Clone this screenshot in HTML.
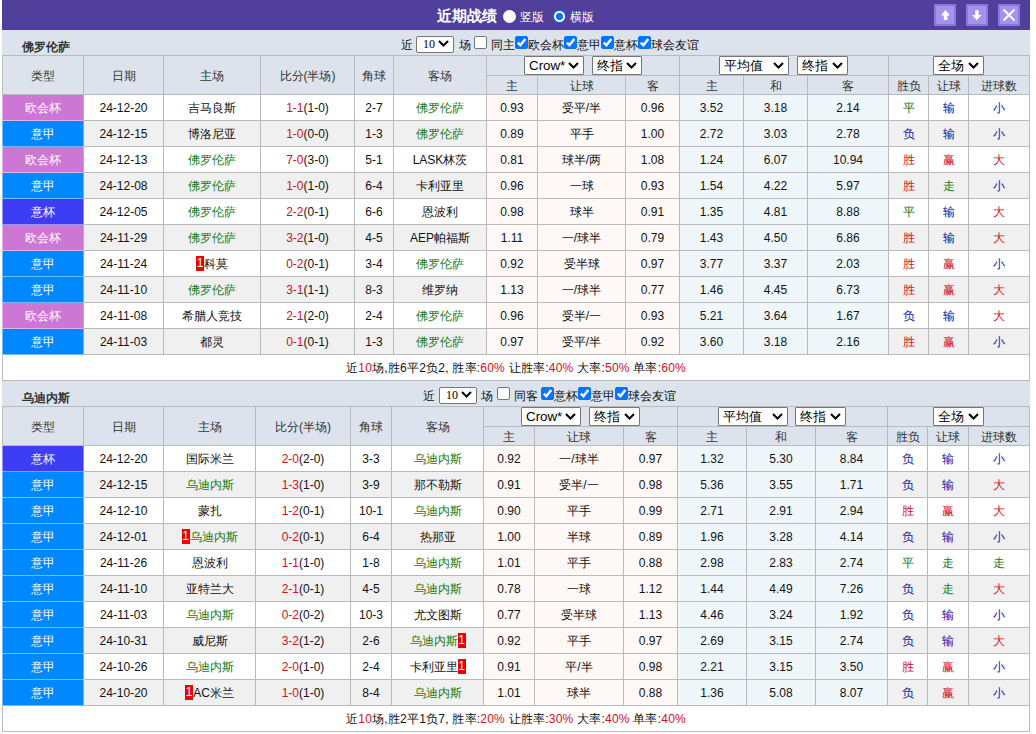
<!DOCTYPE html><html><head><meta charset="utf-8"><style>
*{margin:0;padding:0;box-sizing:border-box}
html,body{width:1036px;height:734px;overflow:hidden;background:#fff}
body{position:relative;font-family:"Liberation Sans",sans-serif;font-size:12px;color:#111}
.t{position:absolute;text-align:center;white-space:nowrap;overflow:visible}
.sum{letter-spacing:0.22px}
.rc{display:inline-block;background:#e00;color:#fff;font-size:12px;width:8px;height:15px;line-height:15px;text-align:center;vertical-align:middle;margin-top:-2px}
.ft{position:absolute;height:17px;line-height:17px;white-space:nowrap;color:#111}
.tt{position:absolute;height:30px;line-height:30px;white-space:nowrap;color:#fff}
.sel10{position:absolute;width:38px;height:17px;line-height:15px;border:1px solid #767676;border-radius:2px;background:#fff;padding-left:6px;color:#000;font-family:"Liberation Serif",serif;font-size:12px}
.sel10 .chev{top:3px}
.sel{position:absolute;height:19px;line-height:17px;border:1px solid #767676;border-radius:1px;background:#fff;padding-left:4px;color:#000;font-size:13.333px;white-space:nowrap}
.chev{position:absolute;right:4px;top:5px}
.cb{position:absolute;width:13px;height:13px;border:1px solid #767676;border-radius:2px;background:#fff}
.cb.on{background:#0075ff;border-color:#0075ff}
.rd{position:absolute;width:13px;height:13px;border-radius:50%;background:#fff}
.rd.on{border:1px solid #0075ff;background:radial-gradient(circle,#0075ff 0,#0075ff 3.3px,#fff 3.9px)}
.btn{position:absolute;top:4px;width:22px;height:22px;background:#a592ee;border:2px solid #8878d8}
</style></head><body><div style="position:absolute;left:2px;top:0px;width:1028px;height:30px;background:#50409c;"></div>
<div class="tt" style="left:437px;top:1px;font-size:15px;font-weight:bold">近期战绩</div>
<div class="rd" style="left:503px;top:10px"></div>
<div class="tt" style="left:520px;top:2px">竖版</div>
<div class="rd on" style="left:553px;top:10px"></div>
<div class="tt" style="left:570px;top:2px">横版</div>
<div class="btn" style="left:934px"></div>
<div class="btn" style="left:966px"></div>
<div class="btn" style="left:998px"></div>
<svg style="position:absolute;left:0;top:0" width="1036" height="30"><path d="M945.5 10 L941 15.5 H943.8 V20 H947.4 V15.5 H950 Z" fill="#fff"/><path d="M976.8 20.2 L972 15 H975.2 V10.2 H978.6 V15 H981.5 Z" fill="#fff"/><path d="M1003.5 9.5 L1014.5 20.5 M1014.5 9.5 L1003.5 20.5" stroke="#fff" stroke-width="2" fill="none"/></svg>
<div style="position:absolute;left:2px;top:30px;width:1028px;height:25px;background:#dce3ed;"></div>
<div class="t" style="left:22px;top:35px;width:200px;height:25px;line-height:25px;text-align:left;font-weight:bold;color:#333">佛罗伦萨</div>
<div class="ft" style="left:401px;top:37px">近</div>
<div class="sel10" style="left:416px;top:36px">10<svg class="chev" width="11" height="7"><path d="M1 1 L5.5 5.5 L10 1" stroke="#000" stroke-width="2" fill="none"/></svg></div>
<div class="ft" style="left:459px;top:37px">场</div>
<div class="cb" style="left:474px;top:36px"></div>
<div class="ft" style="left:491px;top:37px">同主</div>
<div class="cb on" style="left:515px;top:36px"><svg width="13" height="13" style="position:absolute;left:-1px;top:-1px"><path d="M2.8 6.6 L5.4 9.2 L10.3 2.9" stroke="#fff" stroke-width="2.5" fill="none"/></svg></div>
<div class="ft" style="left:528px;top:37px">欧会杯</div>
<div class="cb on" style="left:564px;top:36px"><svg width="13" height="13" style="position:absolute;left:-1px;top:-1px"><path d="M2.8 6.6 L5.4 9.2 L10.3 2.9" stroke="#fff" stroke-width="2.5" fill="none"/></svg></div>
<div class="ft" style="left:577px;top:37px">意甲</div>
<div class="cb on" style="left:601px;top:36px"><svg width="13" height="13" style="position:absolute;left:-1px;top:-1px"><path d="M2.8 6.6 L5.4 9.2 L10.3 2.9" stroke="#fff" stroke-width="2.5" fill="none"/></svg></div>
<div class="ft" style="left:614px;top:37px">意杯</div>
<div class="cb on" style="left:638px;top:36px"><svg width="13" height="13" style="position:absolute;left:-1px;top:-1px"><path d="M2.8 6.6 L5.4 9.2 L10.3 2.9" stroke="#fff" stroke-width="2.5" fill="none"/></svg></div>
<div class="ft" style="left:651px;top:37px">球会友谊</div>
<div style="position:absolute;left:2px;top:55px;width:1028px;height:39px;background:#dce3ed;"></div>
<div style="position:absolute;left:2px;top:94px;width:1028px;height:26px;background:#fff;"></div>
<div style="position:absolute;left:486px;top:94px;width:193px;height:26px;background:#fef9f7;"></div>
<div style="position:absolute;left:679px;top:94px;width:209px;height:26px;background:#eff7fa;"></div>
<div style="position:absolute;left:2px;top:120px;width:1028px;height:26px;background:#f0f0f0;"></div>
<div style="position:absolute;left:486px;top:120px;width:193px;height:26px;background:#fef9f7;"></div>
<div style="position:absolute;left:679px;top:120px;width:209px;height:26px;background:#eff7fa;"></div>
<div style="position:absolute;left:2px;top:146px;width:1028px;height:26px;background:#fff;"></div>
<div style="position:absolute;left:486px;top:146px;width:193px;height:26px;background:#fef9f7;"></div>
<div style="position:absolute;left:679px;top:146px;width:209px;height:26px;background:#eff7fa;"></div>
<div style="position:absolute;left:2px;top:172px;width:1028px;height:26px;background:#f0f0f0;"></div>
<div style="position:absolute;left:486px;top:172px;width:193px;height:26px;background:#fef9f7;"></div>
<div style="position:absolute;left:679px;top:172px;width:209px;height:26px;background:#eff7fa;"></div>
<div style="position:absolute;left:2px;top:198px;width:1028px;height:26px;background:#fff;"></div>
<div style="position:absolute;left:486px;top:198px;width:193px;height:26px;background:#fef9f7;"></div>
<div style="position:absolute;left:679px;top:198px;width:209px;height:26px;background:#eff7fa;"></div>
<div style="position:absolute;left:2px;top:224px;width:1028px;height:26px;background:#f0f0f0;"></div>
<div style="position:absolute;left:486px;top:224px;width:193px;height:26px;background:#fef9f7;"></div>
<div style="position:absolute;left:679px;top:224px;width:209px;height:26px;background:#eff7fa;"></div>
<div style="position:absolute;left:2px;top:250px;width:1028px;height:26px;background:#fff;"></div>
<div style="position:absolute;left:486px;top:250px;width:193px;height:26px;background:#fef9f7;"></div>
<div style="position:absolute;left:679px;top:250px;width:209px;height:26px;background:#eff7fa;"></div>
<div style="position:absolute;left:2px;top:276px;width:1028px;height:26px;background:#f0f0f0;"></div>
<div style="position:absolute;left:486px;top:276px;width:193px;height:26px;background:#fef9f7;"></div>
<div style="position:absolute;left:679px;top:276px;width:209px;height:26px;background:#eff7fa;"></div>
<div style="position:absolute;left:2px;top:302px;width:1028px;height:26px;background:#fff;"></div>
<div style="position:absolute;left:486px;top:302px;width:193px;height:26px;background:#fef9f7;"></div>
<div style="position:absolute;left:679px;top:302px;width:209px;height:26px;background:#eff7fa;"></div>
<div style="position:absolute;left:2px;top:328px;width:1028px;height:26px;background:#f0f0f0;"></div>
<div style="position:absolute;left:486px;top:328px;width:193px;height:26px;background:#fef9f7;"></div>
<div style="position:absolute;left:679px;top:328px;width:209px;height:26px;background:#eff7fa;"></div>
<div style="position:absolute;left:2px;top:354px;width:1028px;height:26px;background:#fff;"></div>
<svg style="position:absolute;left:0;top:0" width="1036" height="734"><g opacity="1" fill="#bababa" shape-rendering="crispEdges"><rect x="2" y="55" width="1028" height="1"/><rect x="486" y="75" width="544" height="1"/><rect x="2" y="94" width="1028" height="1"/><rect x="2" y="120" width="1028" height="1"/><rect x="2" y="146" width="1028" height="1"/><rect x="2" y="172" width="1028" height="1"/><rect x="2" y="198" width="1028" height="1"/><rect x="2" y="224" width="1028" height="1"/><rect x="2" y="250" width="1028" height="1"/><rect x="2" y="276" width="1028" height="1"/><rect x="2" y="302" width="1028" height="1"/><rect x="2" y="328" width="1028" height="1"/><rect x="2" y="354" width="1028" height="1"/><rect x="2" y="380" width="1028" height="1"/><rect x="2" y="55" width="1" height="326"/><rect x="1029" y="55" width="1" height="326"/><rect x="83" y="55" width="1" height="299"/><rect x="163" y="55" width="1" height="299"/><rect x="260" y="55" width="1" height="299"/><rect x="354" y="55" width="1" height="299"/><rect x="393" y="55" width="1" height="299"/><rect x="486" y="55" width="1" height="299"/><rect x="537" y="75" width="1" height="279"/><rect x="625" y="75" width="1" height="279"/><rect x="679" y="55" width="1" height="299"/><rect x="743" y="75" width="1" height="279"/><rect x="807" y="75" width="1" height="279"/><rect x="888" y="55" width="1" height="299"/><rect x="928" y="75" width="1" height="279"/><rect x="968" y="75" width="1" height="279"/></g></svg>
<div style="position:absolute;left:2px;top:95px;width:81px;height:26px;background:#cd77d5;"></div>
<div style="position:absolute;left:2px;top:120px;width:81px;height:1px;background:rgba(255,255,255,0.45);"></div>
<div style="position:absolute;left:2px;top:95px;width:1px;height:26px;background:rgba(255,255,255,0.45);"></div>
<div style="position:absolute;left:83px;top:95px;width:1px;height:25px;background:rgba(205,119,213,0.35);"></div>
<div style="position:absolute;left:2px;top:121px;width:81px;height:26px;background:#0088ff;"></div>
<div style="position:absolute;left:2px;top:146px;width:81px;height:1px;background:rgba(255,255,255,0.45);"></div>
<div style="position:absolute;left:2px;top:121px;width:1px;height:26px;background:rgba(255,255,255,0.45);"></div>
<div style="position:absolute;left:83px;top:121px;width:1px;height:25px;background:rgba(0,136,255,0.35);"></div>
<div style="position:absolute;left:2px;top:147px;width:81px;height:26px;background:#cd77d5;"></div>
<div style="position:absolute;left:2px;top:172px;width:81px;height:1px;background:rgba(255,255,255,0.45);"></div>
<div style="position:absolute;left:2px;top:147px;width:1px;height:26px;background:rgba(255,255,255,0.45);"></div>
<div style="position:absolute;left:83px;top:147px;width:1px;height:25px;background:rgba(205,119,213,0.35);"></div>
<div style="position:absolute;left:2px;top:173px;width:81px;height:26px;background:#0088ff;"></div>
<div style="position:absolute;left:2px;top:198px;width:81px;height:1px;background:rgba(255,255,255,0.45);"></div>
<div style="position:absolute;left:2px;top:173px;width:1px;height:26px;background:rgba(255,255,255,0.45);"></div>
<div style="position:absolute;left:83px;top:173px;width:1px;height:25px;background:rgba(0,136,255,0.35);"></div>
<div style="position:absolute;left:2px;top:199px;width:81px;height:26px;background:#3d3df5;"></div>
<div style="position:absolute;left:2px;top:224px;width:81px;height:1px;background:rgba(255,255,255,0.45);"></div>
<div style="position:absolute;left:2px;top:199px;width:1px;height:26px;background:rgba(255,255,255,0.45);"></div>
<div style="position:absolute;left:83px;top:199px;width:1px;height:25px;background:rgba(61,61,245,0.35);"></div>
<div style="position:absolute;left:2px;top:225px;width:81px;height:26px;background:#cd77d5;"></div>
<div style="position:absolute;left:2px;top:250px;width:81px;height:1px;background:rgba(255,255,255,0.45);"></div>
<div style="position:absolute;left:2px;top:225px;width:1px;height:26px;background:rgba(255,255,255,0.45);"></div>
<div style="position:absolute;left:83px;top:225px;width:1px;height:25px;background:rgba(205,119,213,0.35);"></div>
<div style="position:absolute;left:2px;top:251px;width:81px;height:26px;background:#0088ff;"></div>
<div style="position:absolute;left:2px;top:276px;width:81px;height:1px;background:rgba(255,255,255,0.45);"></div>
<div style="position:absolute;left:2px;top:251px;width:1px;height:26px;background:rgba(255,255,255,0.45);"></div>
<div style="position:absolute;left:83px;top:251px;width:1px;height:25px;background:rgba(0,136,255,0.35);"></div>
<div style="position:absolute;left:2px;top:277px;width:81px;height:26px;background:#0088ff;"></div>
<div style="position:absolute;left:2px;top:302px;width:81px;height:1px;background:rgba(255,255,255,0.45);"></div>
<div style="position:absolute;left:2px;top:277px;width:1px;height:26px;background:rgba(255,255,255,0.45);"></div>
<div style="position:absolute;left:83px;top:277px;width:1px;height:25px;background:rgba(0,136,255,0.35);"></div>
<div style="position:absolute;left:2px;top:303px;width:81px;height:26px;background:#cd77d5;"></div>
<div style="position:absolute;left:2px;top:328px;width:81px;height:1px;background:rgba(255,255,255,0.45);"></div>
<div style="position:absolute;left:2px;top:303px;width:1px;height:26px;background:rgba(255,255,255,0.45);"></div>
<div style="position:absolute;left:83px;top:303px;width:1px;height:25px;background:rgba(205,119,213,0.35);"></div>
<div style="position:absolute;left:2px;top:329px;width:81px;height:26px;background:#0088ff;"></div>
<div style="position:absolute;left:2px;top:354px;width:81px;height:1px;background:rgba(255,255,255,0.45);"></div>
<div style="position:absolute;left:2px;top:329px;width:1px;height:26px;background:rgba(255,255,255,0.45);"></div>
<div style="position:absolute;left:83px;top:329px;width:1px;height:25px;background:rgba(0,136,255,0.35);"></div>
<div class="t" style="left:3px;top:57px;width:80px;height:38px;line-height:38px;color:#333">类型</div>
<div class="t" style="left:84px;top:57px;width:79px;height:38px;line-height:38px;color:#333">日期</div>
<div class="t" style="left:164px;top:57px;width:96px;height:38px;line-height:38px;color:#333">主场</div>
<div class="t" style="left:261px;top:57px;width:93px;height:38px;line-height:38px;color:#333">比分(半场)</div>
<div class="t" style="left:355px;top:57px;width:38px;height:38px;line-height:38px;color:#333">角球</div>
<div class="t" style="left:394px;top:57px;width:92px;height:38px;line-height:38px;color:#333">客场</div>
<div class="t" style="left:487px;top:77px;width:50px;height:18px;line-height:18px;color:#333">主</div>
<div class="t" style="left:538px;top:77px;width:87px;height:18px;line-height:18px;color:#333">让球</div>
<div class="t" style="left:626px;top:77px;width:53px;height:18px;line-height:18px;color:#333">客</div>
<div class="t" style="left:680px;top:77px;width:63px;height:18px;line-height:18px;color:#333">主</div>
<div class="t" style="left:744px;top:77px;width:63px;height:18px;line-height:18px;color:#333">和</div>
<div class="t" style="left:808px;top:77px;width:80px;height:18px;line-height:18px;color:#333">客</div>
<div class="t" style="left:889px;top:77px;width:39px;height:18px;line-height:18px;color:#333">胜负</div>
<div class="t" style="left:929px;top:77px;width:39px;height:18px;line-height:18px;color:#333">让球</div>
<div class="t" style="left:969px;top:77px;width:60px;height:18px;line-height:18px;color:#333">进球数</div>
<div class="sel" style="left:524px;top:56px;width:60px"><span>Crow*</span><svg class="chev" width="11" height="7"><path d="M1 1 L5.5 5.5 L10 1" stroke="#000" stroke-width="2" fill="none"/></svg></div>
<div class="sel" style="left:592px;top:56px;width:50px"><span>终指</span><svg class="chev" width="11" height="7"><path d="M1 1 L5.5 5.5 L10 1" stroke="#000" stroke-width="2" fill="none"/></svg></div>
<div class="sel" style="left:719px;top:56px;width:70px"><span>平均值</span><svg class="chev" width="11" height="7"><path d="M1 1 L5.5 5.5 L10 1" stroke="#000" stroke-width="2" fill="none"/></svg></div>
<div class="sel" style="left:797px;top:56px;width:51px"><span>终指</span><svg class="chev" width="11" height="7"><path d="M1 1 L5.5 5.5 L10 1" stroke="#000" stroke-width="2" fill="none"/></svg></div>
<div class="sel" style="left:933px;top:56px;width:51px"><span>全场</span><svg class="chev" width="11" height="7"><path d="M1 1 L5.5 5.5 L10 1" stroke="#000" stroke-width="2" fill="none"/></svg></div>
<div class="t" style="left:3px;top:96px;width:80px;height:25px;line-height:25px;color:#fff;font-weight:500">欧会杯</div>
<div class="t" style="left:84px;top:96px;width:79px;height:25px;line-height:25px;">24-12-20</div>
<div class="t" style="left:164px;top:96px;width:96px;height:25px;line-height:25px;">吉马良斯</div>
<div class="t" style="left:261px;top:96px;width:93px;height:25px;line-height:25px;"><span style="color:#d0101a">1-1</span>(1-0)</div>
<div class="t" style="left:355px;top:96px;width:38px;height:25px;line-height:25px;">2-7</div>
<div class="t" style="left:394px;top:96px;width:92px;height:25px;line-height:25px;"><span style="color:#127a12">佛罗伦萨</span></div>
<div class="t" style="left:487px;top:96px;width:50px;height:25px;line-height:25px;">0.93</div>
<div class="t" style="left:538px;top:96px;width:87px;height:25px;line-height:25px;">受平/半</div>
<div class="t" style="left:626px;top:96px;width:53px;height:25px;line-height:25px;">0.96</div>
<div class="t" style="left:680px;top:96px;width:63px;height:25px;line-height:25px;">3.52</div>
<div class="t" style="left:744px;top:96px;width:63px;height:25px;line-height:25px;">3.18</div>
<div class="t" style="left:808px;top:96px;width:80px;height:25px;line-height:25px;">2.14</div>
<div class="t" style="left:889px;top:96px;width:39px;height:25px;line-height:25px;"><span style="color:#127a12">平</span></div>
<div class="t" style="left:929px;top:96px;width:39px;height:25px;line-height:25px;"><span style="color:#1212a8">输</span></div>
<div class="t" style="left:969px;top:96px;width:60px;height:25px;line-height:25px;"><span style="color:#1212a8">小</span></div>
<div class="t" style="left:3px;top:122px;width:80px;height:25px;line-height:25px;color:#fff;font-weight:500">意甲</div>
<div class="t" style="left:84px;top:122px;width:79px;height:25px;line-height:25px;">24-12-15</div>
<div class="t" style="left:164px;top:122px;width:96px;height:25px;line-height:25px;">博洛尼亚</div>
<div class="t" style="left:261px;top:122px;width:93px;height:25px;line-height:25px;"><span style="color:#d0101a">1-0</span>(0-0)</div>
<div class="t" style="left:355px;top:122px;width:38px;height:25px;line-height:25px;">1-3</div>
<div class="t" style="left:394px;top:122px;width:92px;height:25px;line-height:25px;"><span style="color:#127a12">佛罗伦萨</span></div>
<div class="t" style="left:487px;top:122px;width:50px;height:25px;line-height:25px;">0.89</div>
<div class="t" style="left:538px;top:122px;width:87px;height:25px;line-height:25px;">平手</div>
<div class="t" style="left:626px;top:122px;width:53px;height:25px;line-height:25px;">1.00</div>
<div class="t" style="left:680px;top:122px;width:63px;height:25px;line-height:25px;">2.72</div>
<div class="t" style="left:744px;top:122px;width:63px;height:25px;line-height:25px;">3.03</div>
<div class="t" style="left:808px;top:122px;width:80px;height:25px;line-height:25px;">2.78</div>
<div class="t" style="left:889px;top:122px;width:39px;height:25px;line-height:25px;"><span style="color:#1212a8">负</span></div>
<div class="t" style="left:929px;top:122px;width:39px;height:25px;line-height:25px;"><span style="color:#1212a8">输</span></div>
<div class="t" style="left:969px;top:122px;width:60px;height:25px;line-height:25px;"><span style="color:#1212a8">小</span></div>
<div class="t" style="left:3px;top:148px;width:80px;height:25px;line-height:25px;color:#fff;font-weight:500">欧会杯</div>
<div class="t" style="left:84px;top:148px;width:79px;height:25px;line-height:25px;">24-12-13</div>
<div class="t" style="left:164px;top:148px;width:96px;height:25px;line-height:25px;"><span style="color:#127a12">佛罗伦萨</span></div>
<div class="t" style="left:261px;top:148px;width:93px;height:25px;line-height:25px;"><span style="color:#d0101a">7-0</span>(3-0)</div>
<div class="t" style="left:355px;top:148px;width:38px;height:25px;line-height:25px;">5-1</div>
<div class="t" style="left:394px;top:148px;width:92px;height:25px;line-height:25px;">LASK林茨</div>
<div class="t" style="left:487px;top:148px;width:50px;height:25px;line-height:25px;">0.81</div>
<div class="t" style="left:538px;top:148px;width:87px;height:25px;line-height:25px;">球半/两</div>
<div class="t" style="left:626px;top:148px;width:53px;height:25px;line-height:25px;">1.08</div>
<div class="t" style="left:680px;top:148px;width:63px;height:25px;line-height:25px;">1.24</div>
<div class="t" style="left:744px;top:148px;width:63px;height:25px;line-height:25px;">6.07</div>
<div class="t" style="left:808px;top:148px;width:80px;height:25px;line-height:25px;">10.94</div>
<div class="t" style="left:889px;top:148px;width:39px;height:25px;line-height:25px;"><span style="color:#d0101a">胜</span></div>
<div class="t" style="left:929px;top:148px;width:39px;height:25px;line-height:25px;"><span style="color:#d0101a">赢</span></div>
<div class="t" style="left:969px;top:148px;width:60px;height:25px;line-height:25px;"><span style="color:#d0101a">大</span></div>
<div class="t" style="left:3px;top:174px;width:80px;height:25px;line-height:25px;color:#fff;font-weight:500">意甲</div>
<div class="t" style="left:84px;top:174px;width:79px;height:25px;line-height:25px;">24-12-08</div>
<div class="t" style="left:164px;top:174px;width:96px;height:25px;line-height:25px;"><span style="color:#127a12">佛罗伦萨</span></div>
<div class="t" style="left:261px;top:174px;width:93px;height:25px;line-height:25px;"><span style="color:#d0101a">1-0</span>(1-0)</div>
<div class="t" style="left:355px;top:174px;width:38px;height:25px;line-height:25px;">6-4</div>
<div class="t" style="left:394px;top:174px;width:92px;height:25px;line-height:25px;">卡利亚里</div>
<div class="t" style="left:487px;top:174px;width:50px;height:25px;line-height:25px;">0.96</div>
<div class="t" style="left:538px;top:174px;width:87px;height:25px;line-height:25px;">一球</div>
<div class="t" style="left:626px;top:174px;width:53px;height:25px;line-height:25px;">0.93</div>
<div class="t" style="left:680px;top:174px;width:63px;height:25px;line-height:25px;">1.54</div>
<div class="t" style="left:744px;top:174px;width:63px;height:25px;line-height:25px;">4.22</div>
<div class="t" style="left:808px;top:174px;width:80px;height:25px;line-height:25px;">5.97</div>
<div class="t" style="left:889px;top:174px;width:39px;height:25px;line-height:25px;"><span style="color:#d0101a">胜</span></div>
<div class="t" style="left:929px;top:174px;width:39px;height:25px;line-height:25px;"><span style="color:#127a12">走</span></div>
<div class="t" style="left:969px;top:174px;width:60px;height:25px;line-height:25px;"><span style="color:#1212a8">小</span></div>
<div class="t" style="left:3px;top:200px;width:80px;height:25px;line-height:25px;color:#fff;font-weight:500">意杯</div>
<div class="t" style="left:84px;top:200px;width:79px;height:25px;line-height:25px;">24-12-05</div>
<div class="t" style="left:164px;top:200px;width:96px;height:25px;line-height:25px;"><span style="color:#127a12">佛罗伦萨</span></div>
<div class="t" style="left:261px;top:200px;width:93px;height:25px;line-height:25px;"><span style="color:#d0101a">2-2</span>(0-1)</div>
<div class="t" style="left:355px;top:200px;width:38px;height:25px;line-height:25px;">6-6</div>
<div class="t" style="left:394px;top:200px;width:92px;height:25px;line-height:25px;">恩波利</div>
<div class="t" style="left:487px;top:200px;width:50px;height:25px;line-height:25px;">0.98</div>
<div class="t" style="left:538px;top:200px;width:87px;height:25px;line-height:25px;">球半</div>
<div class="t" style="left:626px;top:200px;width:53px;height:25px;line-height:25px;">0.91</div>
<div class="t" style="left:680px;top:200px;width:63px;height:25px;line-height:25px;">1.35</div>
<div class="t" style="left:744px;top:200px;width:63px;height:25px;line-height:25px;">4.81</div>
<div class="t" style="left:808px;top:200px;width:80px;height:25px;line-height:25px;">8.88</div>
<div class="t" style="left:889px;top:200px;width:39px;height:25px;line-height:25px;"><span style="color:#127a12">平</span></div>
<div class="t" style="left:929px;top:200px;width:39px;height:25px;line-height:25px;"><span style="color:#1212a8">输</span></div>
<div class="t" style="left:969px;top:200px;width:60px;height:25px;line-height:25px;"><span style="color:#d0101a">大</span></div>
<div class="t" style="left:3px;top:226px;width:80px;height:25px;line-height:25px;color:#fff;font-weight:500">欧会杯</div>
<div class="t" style="left:84px;top:226px;width:79px;height:25px;line-height:25px;">24-11-29</div>
<div class="t" style="left:164px;top:226px;width:96px;height:25px;line-height:25px;"><span style="color:#127a12">佛罗伦萨</span></div>
<div class="t" style="left:261px;top:226px;width:93px;height:25px;line-height:25px;"><span style="color:#d0101a">3-2</span>(1-0)</div>
<div class="t" style="left:355px;top:226px;width:38px;height:25px;line-height:25px;">4-5</div>
<div class="t" style="left:394px;top:226px;width:92px;height:25px;line-height:25px;">AEP帕福斯</div>
<div class="t" style="left:487px;top:226px;width:50px;height:25px;line-height:25px;">1.11</div>
<div class="t" style="left:538px;top:226px;width:87px;height:25px;line-height:25px;">一/球半</div>
<div class="t" style="left:626px;top:226px;width:53px;height:25px;line-height:25px;">0.79</div>
<div class="t" style="left:680px;top:226px;width:63px;height:25px;line-height:25px;">1.43</div>
<div class="t" style="left:744px;top:226px;width:63px;height:25px;line-height:25px;">4.50</div>
<div class="t" style="left:808px;top:226px;width:80px;height:25px;line-height:25px;">6.86</div>
<div class="t" style="left:889px;top:226px;width:39px;height:25px;line-height:25px;"><span style="color:#d0101a">胜</span></div>
<div class="t" style="left:929px;top:226px;width:39px;height:25px;line-height:25px;"><span style="color:#1212a8">输</span></div>
<div class="t" style="left:969px;top:226px;width:60px;height:25px;line-height:25px;"><span style="color:#d0101a">大</span></div>
<div class="t" style="left:3px;top:252px;width:80px;height:25px;line-height:25px;color:#fff;font-weight:500">意甲</div>
<div class="t" style="left:84px;top:252px;width:79px;height:25px;line-height:25px;">24-11-24</div>
<div class="t" style="left:164px;top:252px;width:96px;height:25px;line-height:25px;"><span class="rc">1</span>科莫</div>
<div class="t" style="left:261px;top:252px;width:93px;height:25px;line-height:25px;"><span style="color:#d0101a">0-2</span>(0-1)</div>
<div class="t" style="left:355px;top:252px;width:38px;height:25px;line-height:25px;">3-4</div>
<div class="t" style="left:394px;top:252px;width:92px;height:25px;line-height:25px;"><span style="color:#127a12">佛罗伦萨</span></div>
<div class="t" style="left:487px;top:252px;width:50px;height:25px;line-height:25px;">0.92</div>
<div class="t" style="left:538px;top:252px;width:87px;height:25px;line-height:25px;">受半球</div>
<div class="t" style="left:626px;top:252px;width:53px;height:25px;line-height:25px;">0.97</div>
<div class="t" style="left:680px;top:252px;width:63px;height:25px;line-height:25px;">3.77</div>
<div class="t" style="left:744px;top:252px;width:63px;height:25px;line-height:25px;">3.37</div>
<div class="t" style="left:808px;top:252px;width:80px;height:25px;line-height:25px;">2.03</div>
<div class="t" style="left:889px;top:252px;width:39px;height:25px;line-height:25px;"><span style="color:#d0101a">胜</span></div>
<div class="t" style="left:929px;top:252px;width:39px;height:25px;line-height:25px;"><span style="color:#d0101a">赢</span></div>
<div class="t" style="left:969px;top:252px;width:60px;height:25px;line-height:25px;"><span style="color:#1212a8">小</span></div>
<div class="t" style="left:3px;top:278px;width:80px;height:25px;line-height:25px;color:#fff;font-weight:500">意甲</div>
<div class="t" style="left:84px;top:278px;width:79px;height:25px;line-height:25px;">24-11-10</div>
<div class="t" style="left:164px;top:278px;width:96px;height:25px;line-height:25px;"><span style="color:#127a12">佛罗伦萨</span></div>
<div class="t" style="left:261px;top:278px;width:93px;height:25px;line-height:25px;"><span style="color:#d0101a">3-1</span>(1-1)</div>
<div class="t" style="left:355px;top:278px;width:38px;height:25px;line-height:25px;">8-3</div>
<div class="t" style="left:394px;top:278px;width:92px;height:25px;line-height:25px;">维罗纳</div>
<div class="t" style="left:487px;top:278px;width:50px;height:25px;line-height:25px;">1.13</div>
<div class="t" style="left:538px;top:278px;width:87px;height:25px;line-height:25px;">一/球半</div>
<div class="t" style="left:626px;top:278px;width:53px;height:25px;line-height:25px;">0.77</div>
<div class="t" style="left:680px;top:278px;width:63px;height:25px;line-height:25px;">1.46</div>
<div class="t" style="left:744px;top:278px;width:63px;height:25px;line-height:25px;">4.45</div>
<div class="t" style="left:808px;top:278px;width:80px;height:25px;line-height:25px;">6.73</div>
<div class="t" style="left:889px;top:278px;width:39px;height:25px;line-height:25px;"><span style="color:#d0101a">胜</span></div>
<div class="t" style="left:929px;top:278px;width:39px;height:25px;line-height:25px;"><span style="color:#d0101a">赢</span></div>
<div class="t" style="left:969px;top:278px;width:60px;height:25px;line-height:25px;"><span style="color:#d0101a">大</span></div>
<div class="t" style="left:3px;top:304px;width:80px;height:25px;line-height:25px;color:#fff;font-weight:500">欧会杯</div>
<div class="t" style="left:84px;top:304px;width:79px;height:25px;line-height:25px;">24-11-08</div>
<div class="t" style="left:164px;top:304px;width:96px;height:25px;line-height:25px;">希腊人竞技</div>
<div class="t" style="left:261px;top:304px;width:93px;height:25px;line-height:25px;"><span style="color:#d0101a">2-1</span>(2-0)</div>
<div class="t" style="left:355px;top:304px;width:38px;height:25px;line-height:25px;">2-4</div>
<div class="t" style="left:394px;top:304px;width:92px;height:25px;line-height:25px;"><span style="color:#127a12">佛罗伦萨</span></div>
<div class="t" style="left:487px;top:304px;width:50px;height:25px;line-height:25px;">0.96</div>
<div class="t" style="left:538px;top:304px;width:87px;height:25px;line-height:25px;">受半/一</div>
<div class="t" style="left:626px;top:304px;width:53px;height:25px;line-height:25px;">0.93</div>
<div class="t" style="left:680px;top:304px;width:63px;height:25px;line-height:25px;">5.21</div>
<div class="t" style="left:744px;top:304px;width:63px;height:25px;line-height:25px;">3.64</div>
<div class="t" style="left:808px;top:304px;width:80px;height:25px;line-height:25px;">1.67</div>
<div class="t" style="left:889px;top:304px;width:39px;height:25px;line-height:25px;"><span style="color:#1212a8">负</span></div>
<div class="t" style="left:929px;top:304px;width:39px;height:25px;line-height:25px;"><span style="color:#1212a8">输</span></div>
<div class="t" style="left:969px;top:304px;width:60px;height:25px;line-height:25px;"><span style="color:#d0101a">大</span></div>
<div class="t" style="left:3px;top:330px;width:80px;height:25px;line-height:25px;color:#fff;font-weight:500">意甲</div>
<div class="t" style="left:84px;top:330px;width:79px;height:25px;line-height:25px;">24-11-03</div>
<div class="t" style="left:164px;top:330px;width:96px;height:25px;line-height:25px;">都灵</div>
<div class="t" style="left:261px;top:330px;width:93px;height:25px;line-height:25px;"><span style="color:#d0101a">0-1</span>(0-1)</div>
<div class="t" style="left:355px;top:330px;width:38px;height:25px;line-height:25px;">1-3</div>
<div class="t" style="left:394px;top:330px;width:92px;height:25px;line-height:25px;"><span style="color:#127a12">佛罗伦萨</span></div>
<div class="t" style="left:487px;top:330px;width:50px;height:25px;line-height:25px;">0.97</div>
<div class="t" style="left:538px;top:330px;width:87px;height:25px;line-height:25px;">受平/半</div>
<div class="t" style="left:626px;top:330px;width:53px;height:25px;line-height:25px;">0.92</div>
<div class="t" style="left:680px;top:330px;width:63px;height:25px;line-height:25px;">3.60</div>
<div class="t" style="left:744px;top:330px;width:63px;height:25px;line-height:25px;">3.18</div>
<div class="t" style="left:808px;top:330px;width:80px;height:25px;line-height:25px;">2.16</div>
<div class="t" style="left:889px;top:330px;width:39px;height:25px;line-height:25px;"><span style="color:#d0101a">胜</span></div>
<div class="t" style="left:929px;top:330px;width:39px;height:25px;line-height:25px;"><span style="color:#d0101a">赢</span></div>
<div class="t" style="left:969px;top:330px;width:60px;height:25px;line-height:25px;"><span style="color:#1212a8">小</span></div>
<div class="t" style="left:3px;top:356px;width:1026px;height:25px;line-height:25px;"><span class="sum">近<span style="color:#d0101a">10</span>场,胜6平2负2, 胜率:<span style="color:#d0101a">60%</span> 让胜率:<span style="color:#d0101a">40%</span> 大率:<span style="color:#d0101a">50%</span> 单率:<span style="color:#d0101a">60%</span></span></div>
<div style="position:absolute;left:2px;top:381px;width:1028px;height:25px;background:#dce3ed;"></div>
<div class="t" style="left:22px;top:386px;width:200px;height:25px;line-height:25px;text-align:left;font-weight:bold;color:#333">乌迪内斯</div>
<div class="ft" style="left:423px;top:388px">近</div>
<div class="sel10" style="left:439px;top:387px">10<svg class="chev" width="11" height="7"><path d="M1 1 L5.5 5.5 L10 1" stroke="#000" stroke-width="2" fill="none"/></svg></div>
<div class="ft" style="left:481px;top:388px">场</div>
<div class="cb" style="left:497px;top:387px"></div>
<div class="ft" style="left:514px;top:388px">同客</div>
<div class="cb on" style="left:541px;top:387px"><svg width="13" height="13" style="position:absolute;left:-1px;top:-1px"><path d="M2.8 6.6 L5.4 9.2 L10.3 2.9" stroke="#fff" stroke-width="2.5" fill="none"/></svg></div>
<div class="ft" style="left:554px;top:388px">意杯</div>
<div class="cb on" style="left:578px;top:387px"><svg width="13" height="13" style="position:absolute;left:-1px;top:-1px"><path d="M2.8 6.6 L5.4 9.2 L10.3 2.9" stroke="#fff" stroke-width="2.5" fill="none"/></svg></div>
<div class="ft" style="left:591px;top:388px">意甲</div>
<div class="cb on" style="left:615px;top:387px"><svg width="13" height="13" style="position:absolute;left:-1px;top:-1px"><path d="M2.8 6.6 L5.4 9.2 L10.3 2.9" stroke="#fff" stroke-width="2.5" fill="none"/></svg></div>
<div class="ft" style="left:628px;top:388px">球会友谊</div>
<div style="position:absolute;left:2px;top:406px;width:1028px;height:39px;background:#dce3ed;"></div>
<div style="position:absolute;left:2px;top:445px;width:1028px;height:26px;background:#fff;"></div>
<div style="position:absolute;left:483px;top:445px;width:194px;height:26px;background:#fef9f7;"></div>
<div style="position:absolute;left:677px;top:445px;width:210px;height:26px;background:#eff7fa;"></div>
<div style="position:absolute;left:2px;top:471px;width:1028px;height:26px;background:#f0f0f0;"></div>
<div style="position:absolute;left:483px;top:471px;width:194px;height:26px;background:#fef9f7;"></div>
<div style="position:absolute;left:677px;top:471px;width:210px;height:26px;background:#eff7fa;"></div>
<div style="position:absolute;left:2px;top:497px;width:1028px;height:26px;background:#fff;"></div>
<div style="position:absolute;left:483px;top:497px;width:194px;height:26px;background:#fef9f7;"></div>
<div style="position:absolute;left:677px;top:497px;width:210px;height:26px;background:#eff7fa;"></div>
<div style="position:absolute;left:2px;top:523px;width:1028px;height:26px;background:#f0f0f0;"></div>
<div style="position:absolute;left:483px;top:523px;width:194px;height:26px;background:#fef9f7;"></div>
<div style="position:absolute;left:677px;top:523px;width:210px;height:26px;background:#eff7fa;"></div>
<div style="position:absolute;left:2px;top:549px;width:1028px;height:26px;background:#fff;"></div>
<div style="position:absolute;left:483px;top:549px;width:194px;height:26px;background:#fef9f7;"></div>
<div style="position:absolute;left:677px;top:549px;width:210px;height:26px;background:#eff7fa;"></div>
<div style="position:absolute;left:2px;top:575px;width:1028px;height:26px;background:#f0f0f0;"></div>
<div style="position:absolute;left:483px;top:575px;width:194px;height:26px;background:#fef9f7;"></div>
<div style="position:absolute;left:677px;top:575px;width:210px;height:26px;background:#eff7fa;"></div>
<div style="position:absolute;left:2px;top:601px;width:1028px;height:26px;background:#fff;"></div>
<div style="position:absolute;left:483px;top:601px;width:194px;height:26px;background:#fef9f7;"></div>
<div style="position:absolute;left:677px;top:601px;width:210px;height:26px;background:#eff7fa;"></div>
<div style="position:absolute;left:2px;top:627px;width:1028px;height:26px;background:#f0f0f0;"></div>
<div style="position:absolute;left:483px;top:627px;width:194px;height:26px;background:#fef9f7;"></div>
<div style="position:absolute;left:677px;top:627px;width:210px;height:26px;background:#eff7fa;"></div>
<div style="position:absolute;left:2px;top:653px;width:1028px;height:26px;background:#fff;"></div>
<div style="position:absolute;left:483px;top:653px;width:194px;height:26px;background:#fef9f7;"></div>
<div style="position:absolute;left:677px;top:653px;width:210px;height:26px;background:#eff7fa;"></div>
<div style="position:absolute;left:2px;top:679px;width:1028px;height:26px;background:#f0f0f0;"></div>
<div style="position:absolute;left:483px;top:679px;width:194px;height:26px;background:#fef9f7;"></div>
<div style="position:absolute;left:677px;top:679px;width:210px;height:26px;background:#eff7fa;"></div>
<div style="position:absolute;left:2px;top:705px;width:1028px;height:26px;background:#fff;"></div>
<svg style="position:absolute;left:0;top:0" width="1036" height="734"><g opacity="1" fill="#bababa" shape-rendering="crispEdges"><rect x="2" y="406" width="1028" height="1"/><rect x="483" y="426" width="547" height="1"/><rect x="2" y="445" width="1028" height="1"/><rect x="2" y="471" width="1028" height="1"/><rect x="2" y="497" width="1028" height="1"/><rect x="2" y="523" width="1028" height="1"/><rect x="2" y="549" width="1028" height="1"/><rect x="2" y="575" width="1028" height="1"/><rect x="2" y="601" width="1028" height="1"/><rect x="2" y="627" width="1028" height="1"/><rect x="2" y="653" width="1028" height="1"/><rect x="2" y="679" width="1028" height="1"/><rect x="2" y="705" width="1028" height="1"/><rect x="2" y="731" width="1028" height="1"/><rect x="2" y="406" width="1" height="326"/><rect x="1029" y="406" width="1" height="326"/><rect x="83" y="406" width="1" height="299"/><rect x="163" y="406" width="1" height="299"/><rect x="255" y="406" width="1" height="299"/><rect x="350" y="406" width="1" height="299"/><rect x="391" y="406" width="1" height="299"/><rect x="483" y="406" width="1" height="299"/><rect x="534" y="426" width="1" height="279"/><rect x="623" y="426" width="1" height="279"/><rect x="677" y="406" width="1" height="299"/><rect x="746" y="426" width="1" height="279"/><rect x="815" y="426" width="1" height="279"/><rect x="887" y="406" width="1" height="299"/><rect x="927" y="426" width="1" height="279"/><rect x="968" y="426" width="1" height="279"/></g></svg>
<div style="position:absolute;left:2px;top:446px;width:81px;height:26px;background:#3d3df5;"></div>
<div style="position:absolute;left:2px;top:471px;width:81px;height:1px;background:rgba(255,255,255,0.45);"></div>
<div style="position:absolute;left:2px;top:446px;width:1px;height:26px;background:rgba(255,255,255,0.45);"></div>
<div style="position:absolute;left:83px;top:446px;width:1px;height:25px;background:rgba(61,61,245,0.35);"></div>
<div style="position:absolute;left:2px;top:472px;width:81px;height:26px;background:#0088ff;"></div>
<div style="position:absolute;left:2px;top:497px;width:81px;height:1px;background:rgba(255,255,255,0.45);"></div>
<div style="position:absolute;left:2px;top:472px;width:1px;height:26px;background:rgba(255,255,255,0.45);"></div>
<div style="position:absolute;left:83px;top:472px;width:1px;height:25px;background:rgba(0,136,255,0.35);"></div>
<div style="position:absolute;left:2px;top:498px;width:81px;height:26px;background:#0088ff;"></div>
<div style="position:absolute;left:2px;top:523px;width:81px;height:1px;background:rgba(255,255,255,0.45);"></div>
<div style="position:absolute;left:2px;top:498px;width:1px;height:26px;background:rgba(255,255,255,0.45);"></div>
<div style="position:absolute;left:83px;top:498px;width:1px;height:25px;background:rgba(0,136,255,0.35);"></div>
<div style="position:absolute;left:2px;top:524px;width:81px;height:26px;background:#0088ff;"></div>
<div style="position:absolute;left:2px;top:549px;width:81px;height:1px;background:rgba(255,255,255,0.45);"></div>
<div style="position:absolute;left:2px;top:524px;width:1px;height:26px;background:rgba(255,255,255,0.45);"></div>
<div style="position:absolute;left:83px;top:524px;width:1px;height:25px;background:rgba(0,136,255,0.35);"></div>
<div style="position:absolute;left:2px;top:550px;width:81px;height:26px;background:#0088ff;"></div>
<div style="position:absolute;left:2px;top:575px;width:81px;height:1px;background:rgba(255,255,255,0.45);"></div>
<div style="position:absolute;left:2px;top:550px;width:1px;height:26px;background:rgba(255,255,255,0.45);"></div>
<div style="position:absolute;left:83px;top:550px;width:1px;height:25px;background:rgba(0,136,255,0.35);"></div>
<div style="position:absolute;left:2px;top:576px;width:81px;height:26px;background:#0088ff;"></div>
<div style="position:absolute;left:2px;top:601px;width:81px;height:1px;background:rgba(255,255,255,0.45);"></div>
<div style="position:absolute;left:2px;top:576px;width:1px;height:26px;background:rgba(255,255,255,0.45);"></div>
<div style="position:absolute;left:83px;top:576px;width:1px;height:25px;background:rgba(0,136,255,0.35);"></div>
<div style="position:absolute;left:2px;top:602px;width:81px;height:26px;background:#0088ff;"></div>
<div style="position:absolute;left:2px;top:627px;width:81px;height:1px;background:rgba(255,255,255,0.45);"></div>
<div style="position:absolute;left:2px;top:602px;width:1px;height:26px;background:rgba(255,255,255,0.45);"></div>
<div style="position:absolute;left:83px;top:602px;width:1px;height:25px;background:rgba(0,136,255,0.35);"></div>
<div style="position:absolute;left:2px;top:628px;width:81px;height:26px;background:#0088ff;"></div>
<div style="position:absolute;left:2px;top:653px;width:81px;height:1px;background:rgba(255,255,255,0.45);"></div>
<div style="position:absolute;left:2px;top:628px;width:1px;height:26px;background:rgba(255,255,255,0.45);"></div>
<div style="position:absolute;left:83px;top:628px;width:1px;height:25px;background:rgba(0,136,255,0.35);"></div>
<div style="position:absolute;left:2px;top:654px;width:81px;height:26px;background:#0088ff;"></div>
<div style="position:absolute;left:2px;top:679px;width:81px;height:1px;background:rgba(255,255,255,0.45);"></div>
<div style="position:absolute;left:2px;top:654px;width:1px;height:26px;background:rgba(255,255,255,0.45);"></div>
<div style="position:absolute;left:83px;top:654px;width:1px;height:25px;background:rgba(0,136,255,0.35);"></div>
<div style="position:absolute;left:2px;top:680px;width:81px;height:26px;background:#0088ff;"></div>
<div style="position:absolute;left:2px;top:705px;width:81px;height:1px;background:rgba(255,255,255,0.45);"></div>
<div style="position:absolute;left:2px;top:680px;width:1px;height:26px;background:rgba(255,255,255,0.45);"></div>
<div style="position:absolute;left:83px;top:680px;width:1px;height:25px;background:rgba(0,136,255,0.35);"></div>
<div class="t" style="left:3px;top:408px;width:80px;height:38px;line-height:38px;color:#333">类型</div>
<div class="t" style="left:84px;top:408px;width:79px;height:38px;line-height:38px;color:#333">日期</div>
<div class="t" style="left:164px;top:408px;width:91px;height:38px;line-height:38px;color:#333">主场</div>
<div class="t" style="left:256px;top:408px;width:94px;height:38px;line-height:38px;color:#333">比分(半场)</div>
<div class="t" style="left:351px;top:408px;width:40px;height:38px;line-height:38px;color:#333">角球</div>
<div class="t" style="left:392px;top:408px;width:91px;height:38px;line-height:38px;color:#333">客场</div>
<div class="t" style="left:484px;top:428px;width:50px;height:18px;line-height:18px;color:#333">主</div>
<div class="t" style="left:535px;top:428px;width:88px;height:18px;line-height:18px;color:#333">让球</div>
<div class="t" style="left:624px;top:428px;width:53px;height:18px;line-height:18px;color:#333">客</div>
<div class="t" style="left:678px;top:428px;width:68px;height:18px;line-height:18px;color:#333">主</div>
<div class="t" style="left:747px;top:428px;width:68px;height:18px;line-height:18px;color:#333">和</div>
<div class="t" style="left:816px;top:428px;width:71px;height:18px;line-height:18px;color:#333">客</div>
<div class="t" style="left:888px;top:428px;width:39px;height:18px;line-height:18px;color:#333">胜负</div>
<div class="t" style="left:928px;top:428px;width:40px;height:18px;line-height:18px;color:#333">让球</div>
<div class="t" style="left:969px;top:428px;width:60px;height:18px;line-height:18px;color:#333">进球数</div>
<div class="sel" style="left:521px;top:407px;width:60px"><span>Crow*</span><svg class="chev" width="11" height="7"><path d="M1 1 L5.5 5.5 L10 1" stroke="#000" stroke-width="2" fill="none"/></svg></div>
<div class="sel" style="left:589px;top:407px;width:51px"><span>终指</span><svg class="chev" width="11" height="7"><path d="M1 1 L5.5 5.5 L10 1" stroke="#000" stroke-width="2" fill="none"/></svg></div>
<div class="sel" style="left:718px;top:407px;width:70px"><span>平均值</span><svg class="chev" width="11" height="7"><path d="M1 1 L5.5 5.5 L10 1" stroke="#000" stroke-width="2" fill="none"/></svg></div>
<div class="sel" style="left:795px;top:407px;width:51px"><span>终指</span><svg class="chev" width="11" height="7"><path d="M1 1 L5.5 5.5 L10 1" stroke="#000" stroke-width="2" fill="none"/></svg></div>
<div class="sel" style="left:933px;top:407px;width:51px"><span>全场</span><svg class="chev" width="11" height="7"><path d="M1 1 L5.5 5.5 L10 1" stroke="#000" stroke-width="2" fill="none"/></svg></div>
<div class="t" style="left:3px;top:447px;width:80px;height:25px;line-height:25px;color:#fff;font-weight:500">意杯</div>
<div class="t" style="left:84px;top:447px;width:79px;height:25px;line-height:25px;">24-12-20</div>
<div class="t" style="left:164px;top:447px;width:91px;height:25px;line-height:25px;">国际米兰</div>
<div class="t" style="left:256px;top:447px;width:94px;height:25px;line-height:25px;"><span style="color:#d0101a">2-0</span>(2-0)</div>
<div class="t" style="left:351px;top:447px;width:40px;height:25px;line-height:25px;">3-3</div>
<div class="t" style="left:392px;top:447px;width:91px;height:25px;line-height:25px;"><span style="color:#127a12">乌迪内斯</span></div>
<div class="t" style="left:484px;top:447px;width:50px;height:25px;line-height:25px;">0.92</div>
<div class="t" style="left:535px;top:447px;width:88px;height:25px;line-height:25px;">一/球半</div>
<div class="t" style="left:624px;top:447px;width:53px;height:25px;line-height:25px;">0.97</div>
<div class="t" style="left:678px;top:447px;width:68px;height:25px;line-height:25px;">1.32</div>
<div class="t" style="left:747px;top:447px;width:68px;height:25px;line-height:25px;">5.30</div>
<div class="t" style="left:816px;top:447px;width:71px;height:25px;line-height:25px;">8.84</div>
<div class="t" style="left:888px;top:447px;width:39px;height:25px;line-height:25px;"><span style="color:#1212a8">负</span></div>
<div class="t" style="left:928px;top:447px;width:40px;height:25px;line-height:25px;"><span style="color:#1212a8">输</span></div>
<div class="t" style="left:969px;top:447px;width:60px;height:25px;line-height:25px;"><span style="color:#1212a8">小</span></div>
<div class="t" style="left:3px;top:473px;width:80px;height:25px;line-height:25px;color:#fff;font-weight:500">意甲</div>
<div class="t" style="left:84px;top:473px;width:79px;height:25px;line-height:25px;">24-12-15</div>
<div class="t" style="left:164px;top:473px;width:91px;height:25px;line-height:25px;"><span style="color:#127a12">乌迪内斯</span></div>
<div class="t" style="left:256px;top:473px;width:94px;height:25px;line-height:25px;"><span style="color:#d0101a">1-3</span>(1-0)</div>
<div class="t" style="left:351px;top:473px;width:40px;height:25px;line-height:25px;">3-9</div>
<div class="t" style="left:392px;top:473px;width:91px;height:25px;line-height:25px;">那不勒斯</div>
<div class="t" style="left:484px;top:473px;width:50px;height:25px;line-height:25px;">0.91</div>
<div class="t" style="left:535px;top:473px;width:88px;height:25px;line-height:25px;">受半/一</div>
<div class="t" style="left:624px;top:473px;width:53px;height:25px;line-height:25px;">0.98</div>
<div class="t" style="left:678px;top:473px;width:68px;height:25px;line-height:25px;">5.36</div>
<div class="t" style="left:747px;top:473px;width:68px;height:25px;line-height:25px;">3.55</div>
<div class="t" style="left:816px;top:473px;width:71px;height:25px;line-height:25px;">1.71</div>
<div class="t" style="left:888px;top:473px;width:39px;height:25px;line-height:25px;"><span style="color:#1212a8">负</span></div>
<div class="t" style="left:928px;top:473px;width:40px;height:25px;line-height:25px;"><span style="color:#1212a8">输</span></div>
<div class="t" style="left:969px;top:473px;width:60px;height:25px;line-height:25px;"><span style="color:#d0101a">大</span></div>
<div class="t" style="left:3px;top:499px;width:80px;height:25px;line-height:25px;color:#fff;font-weight:500">意甲</div>
<div class="t" style="left:84px;top:499px;width:79px;height:25px;line-height:25px;">24-12-10</div>
<div class="t" style="left:164px;top:499px;width:91px;height:25px;line-height:25px;">蒙扎</div>
<div class="t" style="left:256px;top:499px;width:94px;height:25px;line-height:25px;"><span style="color:#d0101a">1-2</span>(0-1)</div>
<div class="t" style="left:351px;top:499px;width:40px;height:25px;line-height:25px;">10-1</div>
<div class="t" style="left:392px;top:499px;width:91px;height:25px;line-height:25px;"><span style="color:#127a12">乌迪内斯</span></div>
<div class="t" style="left:484px;top:499px;width:50px;height:25px;line-height:25px;">0.90</div>
<div class="t" style="left:535px;top:499px;width:88px;height:25px;line-height:25px;">平手</div>
<div class="t" style="left:624px;top:499px;width:53px;height:25px;line-height:25px;">0.99</div>
<div class="t" style="left:678px;top:499px;width:68px;height:25px;line-height:25px;">2.71</div>
<div class="t" style="left:747px;top:499px;width:68px;height:25px;line-height:25px;">2.91</div>
<div class="t" style="left:816px;top:499px;width:71px;height:25px;line-height:25px;">2.94</div>
<div class="t" style="left:888px;top:499px;width:39px;height:25px;line-height:25px;"><span style="color:#d0101a">胜</span></div>
<div class="t" style="left:928px;top:499px;width:40px;height:25px;line-height:25px;"><span style="color:#d0101a">赢</span></div>
<div class="t" style="left:969px;top:499px;width:60px;height:25px;line-height:25px;"><span style="color:#d0101a">大</span></div>
<div class="t" style="left:3px;top:525px;width:80px;height:25px;line-height:25px;color:#fff;font-weight:500">意甲</div>
<div class="t" style="left:84px;top:525px;width:79px;height:25px;line-height:25px;">24-12-01</div>
<div class="t" style="left:164px;top:525px;width:91px;height:25px;line-height:25px;"><span class="rc">1</span><span style="color:#127a12">乌迪内斯</span></div>
<div class="t" style="left:256px;top:525px;width:94px;height:25px;line-height:25px;"><span style="color:#d0101a">0-2</span>(0-1)</div>
<div class="t" style="left:351px;top:525px;width:40px;height:25px;line-height:25px;">6-4</div>
<div class="t" style="left:392px;top:525px;width:91px;height:25px;line-height:25px;">热那亚</div>
<div class="t" style="left:484px;top:525px;width:50px;height:25px;line-height:25px;">1.00</div>
<div class="t" style="left:535px;top:525px;width:88px;height:25px;line-height:25px;">半球</div>
<div class="t" style="left:624px;top:525px;width:53px;height:25px;line-height:25px;">0.89</div>
<div class="t" style="left:678px;top:525px;width:68px;height:25px;line-height:25px;">1.96</div>
<div class="t" style="left:747px;top:525px;width:68px;height:25px;line-height:25px;">3.28</div>
<div class="t" style="left:816px;top:525px;width:71px;height:25px;line-height:25px;">4.14</div>
<div class="t" style="left:888px;top:525px;width:39px;height:25px;line-height:25px;"><span style="color:#1212a8">负</span></div>
<div class="t" style="left:928px;top:525px;width:40px;height:25px;line-height:25px;"><span style="color:#1212a8">输</span></div>
<div class="t" style="left:969px;top:525px;width:60px;height:25px;line-height:25px;"><span style="color:#1212a8">小</span></div>
<div class="t" style="left:3px;top:551px;width:80px;height:25px;line-height:25px;color:#fff;font-weight:500">意甲</div>
<div class="t" style="left:84px;top:551px;width:79px;height:25px;line-height:25px;">24-11-26</div>
<div class="t" style="left:164px;top:551px;width:91px;height:25px;line-height:25px;">恩波利</div>
<div class="t" style="left:256px;top:551px;width:94px;height:25px;line-height:25px;"><span style="color:#d0101a">1-1</span>(1-0)</div>
<div class="t" style="left:351px;top:551px;width:40px;height:25px;line-height:25px;">1-8</div>
<div class="t" style="left:392px;top:551px;width:91px;height:25px;line-height:25px;"><span style="color:#127a12">乌迪内斯</span></div>
<div class="t" style="left:484px;top:551px;width:50px;height:25px;line-height:25px;">1.01</div>
<div class="t" style="left:535px;top:551px;width:88px;height:25px;line-height:25px;">平手</div>
<div class="t" style="left:624px;top:551px;width:53px;height:25px;line-height:25px;">0.88</div>
<div class="t" style="left:678px;top:551px;width:68px;height:25px;line-height:25px;">2.98</div>
<div class="t" style="left:747px;top:551px;width:68px;height:25px;line-height:25px;">2.83</div>
<div class="t" style="left:816px;top:551px;width:71px;height:25px;line-height:25px;">2.74</div>
<div class="t" style="left:888px;top:551px;width:39px;height:25px;line-height:25px;"><span style="color:#127a12">平</span></div>
<div class="t" style="left:928px;top:551px;width:40px;height:25px;line-height:25px;"><span style="color:#127a12">走</span></div>
<div class="t" style="left:969px;top:551px;width:60px;height:25px;line-height:25px;"><span style="color:#127a12">走</span></div>
<div class="t" style="left:3px;top:577px;width:80px;height:25px;line-height:25px;color:#fff;font-weight:500">意甲</div>
<div class="t" style="left:84px;top:577px;width:79px;height:25px;line-height:25px;">24-11-10</div>
<div class="t" style="left:164px;top:577px;width:91px;height:25px;line-height:25px;">亚特兰大</div>
<div class="t" style="left:256px;top:577px;width:94px;height:25px;line-height:25px;"><span style="color:#d0101a">2-1</span>(0-1)</div>
<div class="t" style="left:351px;top:577px;width:40px;height:25px;line-height:25px;">4-5</div>
<div class="t" style="left:392px;top:577px;width:91px;height:25px;line-height:25px;"><span style="color:#127a12">乌迪内斯</span></div>
<div class="t" style="left:484px;top:577px;width:50px;height:25px;line-height:25px;">0.78</div>
<div class="t" style="left:535px;top:577px;width:88px;height:25px;line-height:25px;">一球</div>
<div class="t" style="left:624px;top:577px;width:53px;height:25px;line-height:25px;">1.12</div>
<div class="t" style="left:678px;top:577px;width:68px;height:25px;line-height:25px;">1.44</div>
<div class="t" style="left:747px;top:577px;width:68px;height:25px;line-height:25px;">4.49</div>
<div class="t" style="left:816px;top:577px;width:71px;height:25px;line-height:25px;">7.26</div>
<div class="t" style="left:888px;top:577px;width:39px;height:25px;line-height:25px;"><span style="color:#1212a8">负</span></div>
<div class="t" style="left:928px;top:577px;width:40px;height:25px;line-height:25px;"><span style="color:#127a12">走</span></div>
<div class="t" style="left:969px;top:577px;width:60px;height:25px;line-height:25px;"><span style="color:#d0101a">大</span></div>
<div class="t" style="left:3px;top:603px;width:80px;height:25px;line-height:25px;color:#fff;font-weight:500">意甲</div>
<div class="t" style="left:84px;top:603px;width:79px;height:25px;line-height:25px;">24-11-03</div>
<div class="t" style="left:164px;top:603px;width:91px;height:25px;line-height:25px;"><span style="color:#127a12">乌迪内斯</span></div>
<div class="t" style="left:256px;top:603px;width:94px;height:25px;line-height:25px;"><span style="color:#d0101a">0-2</span>(0-2)</div>
<div class="t" style="left:351px;top:603px;width:40px;height:25px;line-height:25px;">10-3</div>
<div class="t" style="left:392px;top:603px;width:91px;height:25px;line-height:25px;">尤文图斯</div>
<div class="t" style="left:484px;top:603px;width:50px;height:25px;line-height:25px;">0.77</div>
<div class="t" style="left:535px;top:603px;width:88px;height:25px;line-height:25px;">受半球</div>
<div class="t" style="left:624px;top:603px;width:53px;height:25px;line-height:25px;">1.13</div>
<div class="t" style="left:678px;top:603px;width:68px;height:25px;line-height:25px;">4.46</div>
<div class="t" style="left:747px;top:603px;width:68px;height:25px;line-height:25px;">3.24</div>
<div class="t" style="left:816px;top:603px;width:71px;height:25px;line-height:25px;">1.92</div>
<div class="t" style="left:888px;top:603px;width:39px;height:25px;line-height:25px;"><span style="color:#1212a8">负</span></div>
<div class="t" style="left:928px;top:603px;width:40px;height:25px;line-height:25px;"><span style="color:#1212a8">输</span></div>
<div class="t" style="left:969px;top:603px;width:60px;height:25px;line-height:25px;"><span style="color:#1212a8">小</span></div>
<div class="t" style="left:3px;top:629px;width:80px;height:25px;line-height:25px;color:#fff;font-weight:500">意甲</div>
<div class="t" style="left:84px;top:629px;width:79px;height:25px;line-height:25px;">24-10-31</div>
<div class="t" style="left:164px;top:629px;width:91px;height:25px;line-height:25px;">威尼斯</div>
<div class="t" style="left:256px;top:629px;width:94px;height:25px;line-height:25px;"><span style="color:#d0101a">3-2</span>(1-2)</div>
<div class="t" style="left:351px;top:629px;width:40px;height:25px;line-height:25px;">2-6</div>
<div class="t" style="left:392px;top:629px;width:91px;height:25px;line-height:25px;"><span style="color:#127a12">乌迪内斯</span><span class="rc">1</span></div>
<div class="t" style="left:484px;top:629px;width:50px;height:25px;line-height:25px;">0.92</div>
<div class="t" style="left:535px;top:629px;width:88px;height:25px;line-height:25px;">平手</div>
<div class="t" style="left:624px;top:629px;width:53px;height:25px;line-height:25px;">0.97</div>
<div class="t" style="left:678px;top:629px;width:68px;height:25px;line-height:25px;">2.69</div>
<div class="t" style="left:747px;top:629px;width:68px;height:25px;line-height:25px;">3.15</div>
<div class="t" style="left:816px;top:629px;width:71px;height:25px;line-height:25px;">2.74</div>
<div class="t" style="left:888px;top:629px;width:39px;height:25px;line-height:25px;"><span style="color:#1212a8">负</span></div>
<div class="t" style="left:928px;top:629px;width:40px;height:25px;line-height:25px;"><span style="color:#1212a8">输</span></div>
<div class="t" style="left:969px;top:629px;width:60px;height:25px;line-height:25px;"><span style="color:#d0101a">大</span></div>
<div class="t" style="left:3px;top:655px;width:80px;height:25px;line-height:25px;color:#fff;font-weight:500">意甲</div>
<div class="t" style="left:84px;top:655px;width:79px;height:25px;line-height:25px;">24-10-26</div>
<div class="t" style="left:164px;top:655px;width:91px;height:25px;line-height:25px;"><span style="color:#127a12">乌迪内斯</span></div>
<div class="t" style="left:256px;top:655px;width:94px;height:25px;line-height:25px;"><span style="color:#d0101a">2-0</span>(1-0)</div>
<div class="t" style="left:351px;top:655px;width:40px;height:25px;line-height:25px;">2-4</div>
<div class="t" style="left:392px;top:655px;width:91px;height:25px;line-height:25px;">卡利亚里<span class="rc">1</span></div>
<div class="t" style="left:484px;top:655px;width:50px;height:25px;line-height:25px;">0.91</div>
<div class="t" style="left:535px;top:655px;width:88px;height:25px;line-height:25px;">平/半</div>
<div class="t" style="left:624px;top:655px;width:53px;height:25px;line-height:25px;">0.98</div>
<div class="t" style="left:678px;top:655px;width:68px;height:25px;line-height:25px;">2.21</div>
<div class="t" style="left:747px;top:655px;width:68px;height:25px;line-height:25px;">3.15</div>
<div class="t" style="left:816px;top:655px;width:71px;height:25px;line-height:25px;">3.50</div>
<div class="t" style="left:888px;top:655px;width:39px;height:25px;line-height:25px;"><span style="color:#d0101a">胜</span></div>
<div class="t" style="left:928px;top:655px;width:40px;height:25px;line-height:25px;"><span style="color:#d0101a">赢</span></div>
<div class="t" style="left:969px;top:655px;width:60px;height:25px;line-height:25px;"><span style="color:#1212a8">小</span></div>
<div class="t" style="left:3px;top:681px;width:80px;height:25px;line-height:25px;color:#fff;font-weight:500">意甲</div>
<div class="t" style="left:84px;top:681px;width:79px;height:25px;line-height:25px;">24-10-20</div>
<div class="t" style="left:164px;top:681px;width:91px;height:25px;line-height:25px;"><span class="rc">1</span>AC米兰</div>
<div class="t" style="left:256px;top:681px;width:94px;height:25px;line-height:25px;"><span style="color:#d0101a">1-0</span>(1-0)</div>
<div class="t" style="left:351px;top:681px;width:40px;height:25px;line-height:25px;">8-4</div>
<div class="t" style="left:392px;top:681px;width:91px;height:25px;line-height:25px;"><span style="color:#127a12">乌迪内斯</span></div>
<div class="t" style="left:484px;top:681px;width:50px;height:25px;line-height:25px;">1.01</div>
<div class="t" style="left:535px;top:681px;width:88px;height:25px;line-height:25px;">球半</div>
<div class="t" style="left:624px;top:681px;width:53px;height:25px;line-height:25px;">0.88</div>
<div class="t" style="left:678px;top:681px;width:68px;height:25px;line-height:25px;">1.36</div>
<div class="t" style="left:747px;top:681px;width:68px;height:25px;line-height:25px;">5.08</div>
<div class="t" style="left:816px;top:681px;width:71px;height:25px;line-height:25px;">8.07</div>
<div class="t" style="left:888px;top:681px;width:39px;height:25px;line-height:25px;"><span style="color:#1212a8">负</span></div>
<div class="t" style="left:928px;top:681px;width:40px;height:25px;line-height:25px;"><span style="color:#d0101a">赢</span></div>
<div class="t" style="left:969px;top:681px;width:60px;height:25px;line-height:25px;"><span style="color:#1212a8">小</span></div>
<div class="t" style="left:3px;top:707px;width:1026px;height:25px;line-height:25px;"><span class="sum">近<span style="color:#d0101a">10</span>场,胜2平1负7, 胜率:<span style="color:#d0101a">20%</span> 让胜率:<span style="color:#d0101a">30%</span> 大率:<span style="color:#d0101a">40%</span> 单率:<span style="color:#d0101a">40%</span></span></div></body></html>
